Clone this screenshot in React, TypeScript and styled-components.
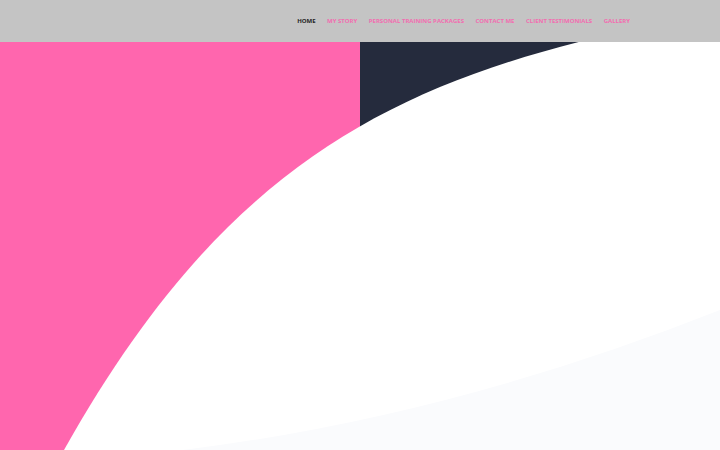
import React from "react";
import styled, { createGlobalStyle } from "styled-components";

const Global = createGlobalStyle`
  html, body { margin: 0; padding: 0; background: #ffffff; }
  body { font-family: "Open Sans", "Liberation Sans", sans-serif; }
`;

const Page = styled.div`
  width: 720px;
  height: 450px;
  display: flex;
  flex-direction: column;
  overflow: hidden;
`;

const Header = styled.header`
  height: 42px;
  flex: 0 0 42px;
  background: #c4c4c4;
  display: flex;
  align-items: center;
  justify-content: flex-end;
  padding-right: 90px;
  position: relative;
  z-index: 2;
`;

const Nav = styled.nav`
  display: flex;
  gap: 11.5px;
  align-items: center;
`;

const NavLink = styled.a<{ $active?: boolean }>`
  font-family: "Open Sans", "Liberation Sans", sans-serif;
  font-size: 6px;
  font-weight: 700;
  text-transform: uppercase;
  text-decoration: none;
  color: ${(p) => (p.$active ? "#1f1f1f" : "#f26db0")};
  white-space: nowrap;
  line-height: 1;
`;

const Hero = styled.section`
  position: relative;
  flex: 1;
  display: grid;
  grid-template-columns: 360px 360px;
  overflow: hidden;
`;

const Half = styled.div<{ $bg: string }>`
  background: ${(p) => p.$bg};
`;

const Wave = styled.svg`
  position: absolute;
  inset: 0;
  width: 100%;
  height: 100%;
`;

const items = [
  "Home",
  "My Story",
  "Personal Training Packages",
  "Contact Me",
  "Client Testimonials",
  "Gallery",
];

export default function App() {
  return (
    <>
      <Global />
      <Page>
        <Header>
          <Nav>
            {items.map((t, i) => (
              <NavLink key={t} href="#" $active={i === 0}>
                {t}
              </NavLink>
            ))}
          </Nav>
        </Header>
        <Hero>
          <Half $bg="#ff66ae" />
          <Half $bg="#252b3d" />
          <Wave viewBox="0 0 720 408" preserveAspectRatio="none">
            <path d="M64 408 C238 98 422 24 720 -30 L720 408 Z" fill="#ffffff" />
            <path d="M183 408 Q450 375 720 268 L720 408 Z" fill="#fafbfd" />
          </Wave>
        </Hero>
      </Page>
    </>
  );
}
